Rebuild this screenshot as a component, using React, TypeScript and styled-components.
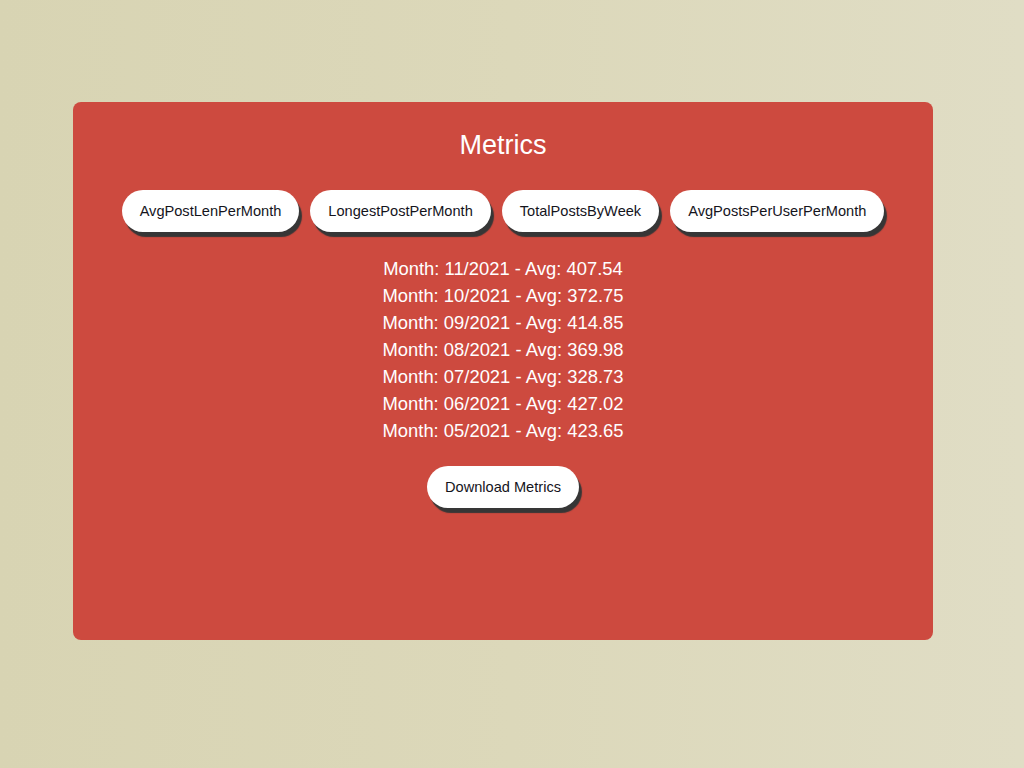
import React from "react";
import styled, { createGlobalStyle } from "styled-components";

const Global = createGlobalStyle`
  html, body { margin: 0; padding: 0; }
  body {
    min-height: 768px;
    background: linear-gradient(90deg, #d8d4b3 0%, #dcd8ba 50%, #e0ddc5 100%);
    font-family: "Liberation Sans", Arial, sans-serif;
  }
`;

const Page = styled.div`
  padding: 102px 91px 0 73px;
`;

const Card = styled.section`
  height: 538px;
  box-sizing: border-box;
  background: #cd4a3f;
  border-radius: 8px;
  padding-top: 28px;
  display: flex;
  flex-direction: column;
  align-items: center;
`;

const Title = styled.h2`
  margin: 0;
  font-size: 27px;
  font-weight: normal;
  color: #ffffff;
`;

const ButtonRow = styled.div`
  margin-top: 29px;
  display: flex;
  gap: 11px;
  justify-content: center;
`;

const PillButton = styled.button<{ $top?: number }>`
  margin-top: ${(p) => p.$top ?? 0}px;
  font-family: "Liberation Sans", Arial, sans-serif;
  font-size: 14.6px;
  line-height: 18px;
  color: #14141c;
  background: #ffffff;
  border: none;
  border-radius: 22px;
  padding: 12px 18px;
  box-shadow: 3px 5px 1px #363636;
  cursor: pointer;
`;

const List = styled.div`
  margin-top: 23px;
  display: flex;
  flex-direction: column;
  align-items: center;
`;

const Line = styled.div`
  color: #ffffff;
  font-size: 18.4px;
  line-height: 27px;
`;

const tabs = [
  "AvgPostLenPerMonth",
  "LongestPostPerMonth",
  "TotalPostsByWeek",
  "AvgPostsPerUserPerMonth",
];

const rows = [
  ["11/2021", "407.54"],
  ["10/2021", "372.75"],
  ["09/2021", "414.85"],
  ["08/2021", "369.98"],
  ["07/2021", "328.73"],
  ["06/2021", "427.02"],
  ["05/2021", "423.65"],
];

export default function App() {
  return (
    <>
      <Global />
      <Page>
        <Card>
          <Title>Metrics</Title>
          <ButtonRow>
            {tabs.map((t) => (
              <PillButton key={t}>{t}</PillButton>
            ))}
          </ButtonRow>
          <List>
            {rows.map(([m, a]) => (
              <Line key={m}>
                Month: {m} - Avg: {a}
              </Line>
            ))}
          </List>
          <PillButton $top={22}>Download Metrics</PillButton>
        </Card>
      </Page>
    </>
  );
}
